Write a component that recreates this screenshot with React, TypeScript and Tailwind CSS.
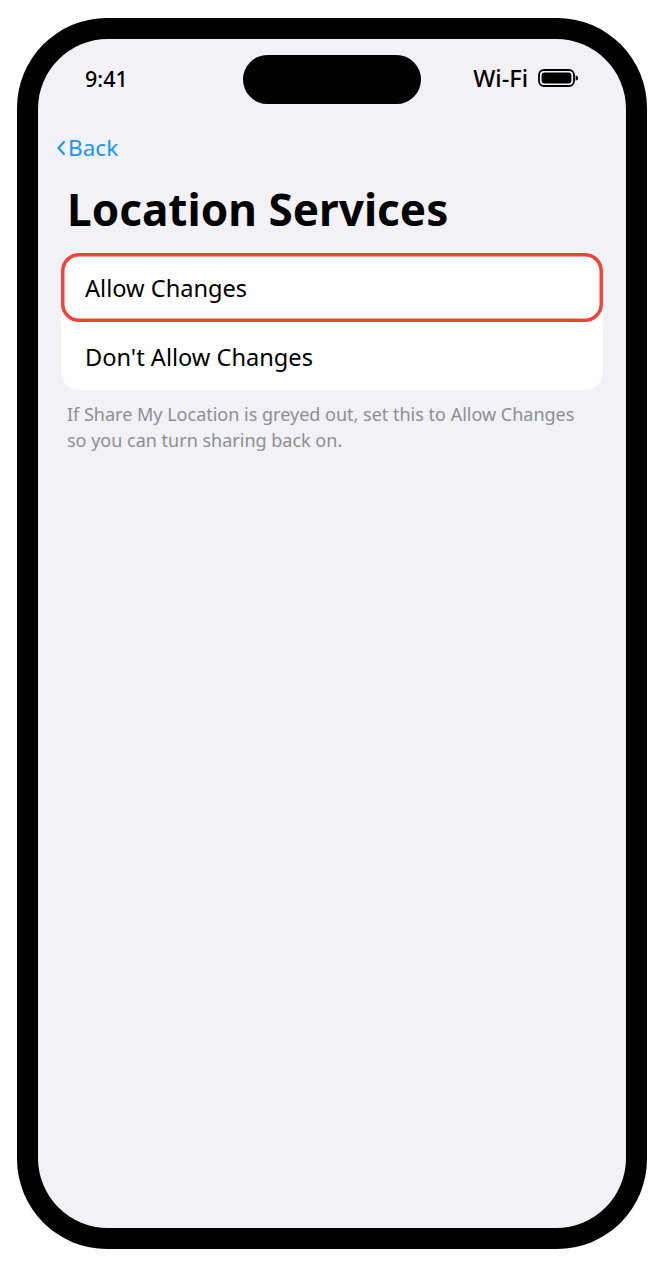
import React from "react";

const font = { fontFamily: '"Noto Sans", "Open Sans", sans-serif' };

const BatteryIcon = () => (
  <svg width="41" height="20" viewBox="0 0 41 20" fill="none" className="block">
    <rect x="1" y="2" width="35" height="16" rx="5" stroke="#000" strokeWidth="1.8" />
    <rect x="3.6" y="4.6" width="29.8" height="10.8" rx="3" fill="#000" />
    <path d="M37.6 7.4c1.6.3 2.6 1.3 2.6 2.6s-1 2.300-2.600 2.600z" fill="#000" />
  </svg>
);

export default function App() {
  return (
    <div className="min-h-screen bg-white pt-[18px] pl-[17px]" style={font}>
      <div className="w-[630px] h-[1231px] bg-black rounded-[90px] p-[21px]">
        <div className="relative w-full h-full bg-[#f1f1f6] rounded-[70px] overflow-hidden">
          {/* dynamic island */}
          <div className="absolute top-[16px] left-[205px] w-[178px] h-[49px] bg-black rounded-full" />

          <div className="flex items-center justify-between h-[48px] mt-[16px] pl-[47px] pr-[47px]">
            <span className="text-[21.5px] font-medium text-black leading-none">9:41</span>
            <div className="flex items-center gap-[10px]">
              <span className="text-[23.5px] font-medium text-black leading-none">Wi-Fi</span>
              <div className="-mt-[3px]">
                <BatteryIcon />
              </div>
            </div>
          </div>

          <div className="flex items-center mt-[27px] pl-[18px] h-[36px] text-[#2196f3] text-[22.6px] leading-none">
            <svg width="10" height="16" viewBox="0 0 10 16" fill="none" className="mr-[2px]">
              <path d="M8 2 2.500 8 8 14" stroke="#2196f3" strokeWidth="2.200" strokeLinecap="round" strokeLinejoin="round" />
            </svg>
            <span>Back</span>
          </div>

          <h1 className="mt-[13px] pl-[29px] text-[44.1px] font-bold leading-[60px] text-black">Location Services</h1>

          <div className="mt-[14px] mx-[23px] bg-white rounded-[18px]">
            <div className="flex items-center h-[69px] pl-[24px] pt-[2px] text-[23.6px] text-black rounded-[18px] ring-[3.5px] ring-inset ring-[#f44336]">
              Allow Changes
            </div>
            <div className="flex items-center h-[68px] pl-[24px] pt-[4px] text-[23.6px] text-black">Don't Allow Changes</div>
          </div>

          <p className="mt-[11px] px-[29px] text-[18px] leading-[26px] text-[#8e8e93]">
            If Share My Location is greyed out, set this to Allow Changes
            <br />
            so you can turn sharing back on.
          </p>
        </div>
      </div>
    </div>
  );
}
